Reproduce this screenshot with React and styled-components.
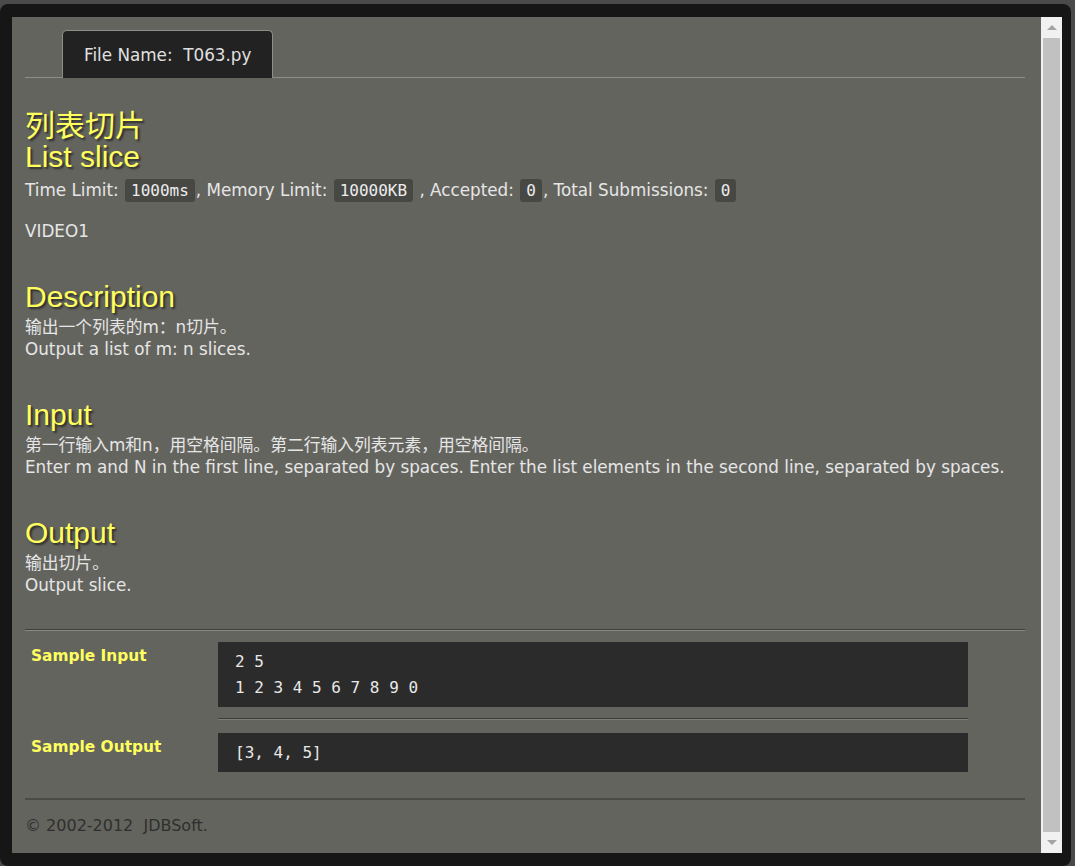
import React from "react";
import styled, { createGlobalStyle } from "styled-components";

const GlobalStyle = createGlobalStyle`
  html, body {
    margin: 0;
    padding: 0;
    background: #4a4a4a;
    overflow: hidden;
  }
  body {
    font-family: "DejaVu Sans", "Noto Sans CJK SC", sans-serif;
  }
`;

const Frame = styled.div`
  margin: 4px 4px 0 0;
  padding: 13px 9px 13px 12px;
  background: #161616;
  border-radius: 8px;
  display: flex;
`;

const Viewport = styled.div`
  flex: 1;
  height: 836px;
  display: flex;
`;

const Content = styled.div`
  flex: 1;
  overflow: hidden;
  background: #64645f;
  padding: 13px 16px 0 13px;
  color: #e6e6e6;
  font-size: 16.8px;
`;

const Tabs = styled.div`
  display: flex;
  padding-left: 37px;
  border-bottom: 1px solid #8e8e89;
`;

const Tab = styled.div`
  height: 47px;
  padding: 0 21px;
  display: flex;
  align-items: center;
  background: #222;
  color: #e0e0e0;
  border: 1px solid #8e8e89;
  border-bottom: none;
  border-radius: 5px 5px 0 0;
  margin-bottom: -1px;
  white-space: pre;
`;

const Title = styled.h1`
  margin: 32px 0 7px;
  font-family: "Liberation Sans", "Noto Sans CJK SC", sans-serif;
  font-weight: normal;
  font-size: 30px;
  line-height: 31px;
  color: #ffff5e;
  text-shadow: 2px 2px 2px #2e2e2c;
`;

const Heading = styled(Title).attrs({ as: "h2" })`
  margin: 39px 0 4px;
`;

const Text = styled.p`
  margin: 0;
  line-height: 22px;
`;

const Limits = styled(Text)`
  white-space: pre;
`;

const Badge = styled.code`
  font-family: "DejaVu Sans Mono", monospace;
  font-size: 16px;
  background: #474744;
  color: #ececec;
  padding: 2px 6px 2px;
  border-radius: 3px;
  margin: 0 1px;
`;

const Video = styled(Text)`
  margin-top: 18px;
`;

const Rule = styled.hr`
  margin: 0;
  border: none;
  border-top: 1px solid #40403d;
  border-bottom: 1px solid #8a8a85;
  height: 0;
`;

const Samples = styled.div`
  margin-top: 33px;
`;

const SampleRow = styled.div`
  display: grid;
  grid-template-columns: 193px 750px;
  padding-top: 11px;
`;

const Label = styled.div`
  padding: 5px 0 0 6px;
  font-weight: bold;
  font-size: 15.4px;
  color: #ffff5e;
`;

const Code = styled.pre`
  margin: 0;
  padding: 7px 17px 6px;
  background: #2b2b2b;
  color: #e8e8e8;
  font-family: "DejaVu Sans Mono", monospace;
  font-size: 16px;
  line-height: 26px;
`;

const RightCol = styled.div`
  display: flex;
  flex-direction: column;
`;

const InnerRule = styled(Rule)`
  margin: 11px 0 2px;
  border-top-color: #3c3c39;
  border-bottom-color: #7e7e79;
`;

const FooterRule = styled.hr`
  margin: 26px 0 0;
  border: none;
  border-top: 2px solid #4a4a47;
  height: 0;
`;

const Footer = styled.div`
  padding-top: 16px;
  font-size: 16px;
  color: #2f2f2d;
  white-space: pre;
`;

const ScrollBar = styled.div`
  width: 21px;
  background: #f1f1f1;
  display: flex;
  flex-direction: column;
  align-items: center;
`;

const Arrow = styled.div`
  height: 21px;
  width: 100%;
  display: flex;
  align-items: center;
  justify-content: center;
  &::after {
    content: "";
    border-left: 5px solid transparent;
    border-right: 5px solid transparent;
    ${props => props.$down ? "border-top: 5px solid #a3a3a3;" : "border-bottom: 5px solid #a3a3a3;"}
  }
`;

const Thumb = styled.div`
  flex: 1;
  width: 17px;
  background: #c1c1c1;
`;

export default function App() {
  return (
    <>
      <GlobalStyle />
      <Frame>
        <Viewport>
          <Content>
            <Tabs>
              <Tab>File Name:  T063.py</Tab>
            </Tabs>
            <Title>
              列表切片
              <br />
              List slice
            </Title>
            <Limits>
              Time Limit: <Badge>1000ms</Badge>, Memory Limit: <Badge>10000KB</Badge> , Accepted: <Badge>0</Badge>, Total Submissions: <Badge>0</Badge>
            </Limits>
            <Video>VIDEO1</Video>

            <Heading>Description</Heading>
            <Text>输出一个列表的m：n切片。</Text>
            <Text>Output a list of m: n slices.</Text>

            <Heading>Input</Heading>
            <Text>第一行输入m和n，用空格间隔。第二行输入列表元素，用空格间隔。</Text>
            <Text>Enter m and N in the first line, separated by spaces. Enter the list elements in the second line, separated by spaces.</Text>

            <Heading>Output</Heading>
            <Text>输出切片。</Text>
            <Text>Output slice.</Text>

            <Samples>
              <Rule />
              <SampleRow>
                <Label>Sample Input</Label>
                <RightCol>
                  <Code>{"2 5\n1 2 3 4 5 6 7 8 9 0"}</Code>
                  <InnerRule />
                </RightCol>
              </SampleRow>
              <SampleRow>
                <Label>Sample Output</Label>
                <Code>[3, 4, 5]</Code>
              </SampleRow>
            </Samples>
            <FooterRule />
            <Footer>© 2002-2012  JDBSoft.</Footer>
          </Content>
          <ScrollBar>
            <Arrow />
            <Thumb />
            <Arrow $down />
          </ScrollBar>
        </Viewport>
      </Frame>
    </>
  );
}
